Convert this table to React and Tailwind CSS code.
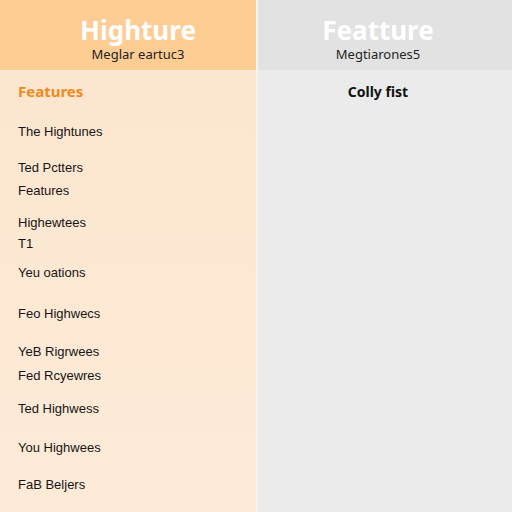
import React from "react";

const items = [
  ["The Hightunes", "mt-[21px]"],
  ["Ted Pctters", "mt-[16px]"],
  ["Features", "mt-[3px]"],
  ["Highewtees", "mt-[12px]"],
  ["T1", "mt-[1px]"],
  ["Yeu oations", "mt-[9px]"],
  ["Feo Highwecs", "mt-[21px]"],
  ["YeB Rigrwees", "mt-[18px]"],
  ["Fed Rcyewres", "mt-[4px]"],
  ["Ted Highwess", "mt-[13px]"],
  ["You Highwees", "mt-[19px]"],
  ["FaB Beljers", "mt-[17px]"],
];

export default function App() {
  return (
    <div
      className="w-[512px] h-[512px] flex overflow-hidden"
      style={{ fontFamily: '"Noto Sans", "Open Sans", sans-serif' }}
    >
      <div className="w-[256px] h-full flex flex-col bg-[#fde9d4]">
        <div className="h-[70px] bg-[#fdcd94] flex flex-col items-center pl-[20px] pt-[16px]">
          <div className="text-[26px] leading-[28px] font-bold text-white">Highture</div>
          <div className="text-[13px] leading-[16px] text-[#222] mt-[2px]">Meglar eartuc3</div>
        </div>
        <div className="flex-1 flex flex-col pl-[18px] pt-[11px] bg-gradient-to-b from-[#fde6cf] to-[#fdebd8]">
          <div className="text-[15px] leading-[20px] font-bold text-[#f08a1c]">Features</div>
          {items.map(([t, m]) => (
            <div
              key={t}
              className={`text-[13px] leading-[20px] text-[#151515] font-['Liberation_Sans',sans-serif] ${m}`}
            >
              {t}
            </div>
          ))}
        </div>
      </div>
      <div className="w-[2px] h-full bg-[#f4f4f4]" />
      <div className="w-[254px] h-full flex flex-col bg-[#ebebeb]">
        <div className="h-[70px] bg-[#e2e2e2] flex flex-col items-center pr-[14px] pt-[16px]">
          <div className="text-[26px] leading-[28px] font-bold text-white">Featture</div>
          <div className="text-[13px] leading-[16px] text-[#222] mt-[2px]">Megtiarones5</div>
        </div>
        <div className="flex-1 flex flex-col items-center pr-[14px] pt-[12px]">
          <div className="text-[14px] leading-[20px] font-bold text-[#111]">Colly fist</div>
        </div>
      </div>
    </div>
  );
}
